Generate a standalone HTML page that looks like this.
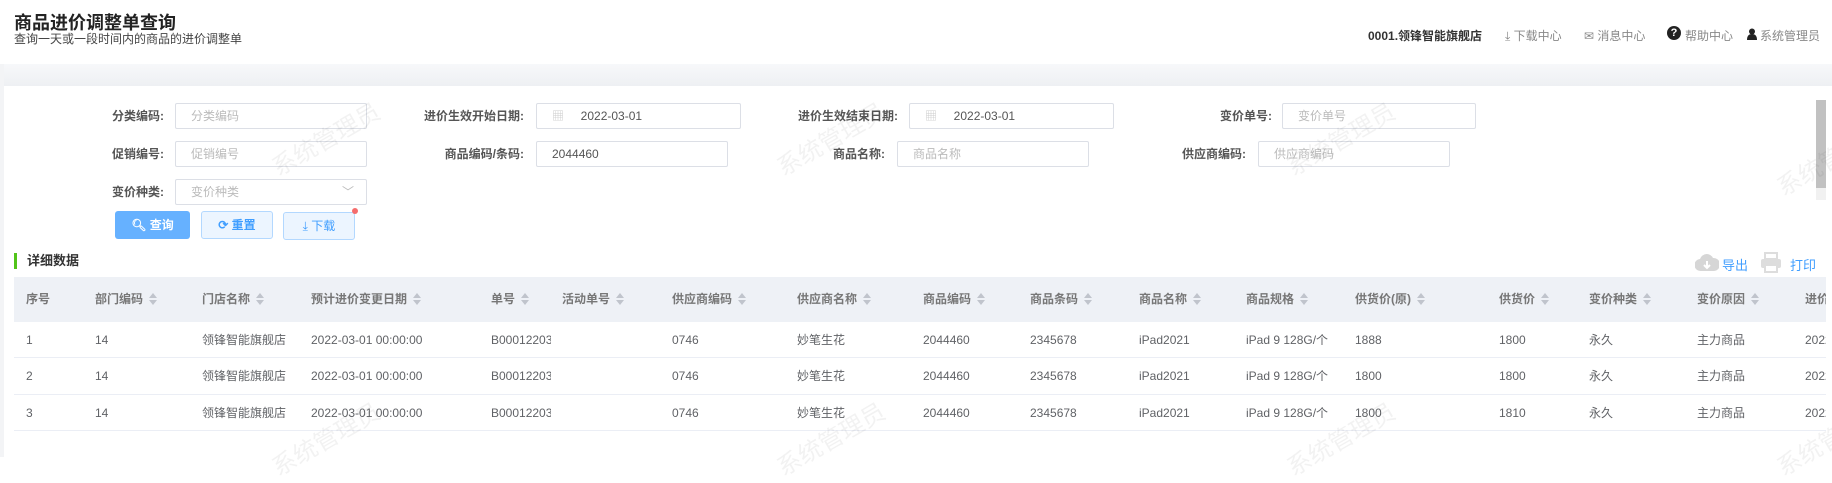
<!DOCTYPE html>
<html><head><meta charset="utf-8"><style>
*{margin:0;padding:0;box-sizing:border-box}
body{width:1832px;height:457px;overflow:hidden;background:#fff;font-family:"Liberation Sans","Noto Sans CJK SC",sans-serif;font-size:12px;color:#606266;position:relative}
.a{position:absolute;white-space:nowrap}
.lbl{position:absolute;color:#555;font-weight:bold;font-size:12px;text-align:right;line-height:26px}
.in{position:absolute;height:26px;border:1px solid #dcdfe6;border-radius:2px;line-height:24px;padding-left:15px;color:#bbb;font-size:12px;background:#fff}
.in.v{color:#555}
.th{position:absolute;top:0;height:45px;line-height:45px;font-weight:bold;color:#777;white-space:nowrap}
.sort{display:inline-block;width:8px;height:12px;vertical-align:middle;margin-left:6px;position:relative;top:-1px}
.sort:before{content:"";position:absolute;left:0;top:0;border:4px solid transparent;border-bottom:5px solid #c0c4cc;border-top:0}
.sort:after{content:"";position:absolute;left:0;top:7px;border:4px solid transparent;border-top:5px solid #c0c4cc;border-bottom:0}
.td{position:absolute;line-height:36px;white-space:nowrap;color:#606266}
.wm{position:absolute;color:rgba(0,0,0,0.05);font-size:24px;transform:rotate(-30deg);white-space:nowrap}
</style></head><body>
<div class="a" style="left:14px;top:9px;font-size:18px;font-weight:bold;color:#222">商品进价调整单查询</div>
<div class="a" style="left:14px;top:30px;font-size:12px;color:#444">查询一天或一段时间内的商品的进价调整单</div>

<div class="a" style="left:1368px;top:27px;font-weight:bold;color:#333">0001.领锋智能旗舰店</div>
<div class="a" style="left:1505px;top:27px;color:#888">⤓ 下载中心</div>
<div class="a" style="left:1584px;top:27px;color:#888">✉ 消息中心</div>
<div class="a" style="left:1667px;top:26px;width:14px;height:14px;border-radius:50%;background:#222;color:#fff;font-size:11px;font-weight:bold;text-align:center;line-height:14px">?</div>
<div class="a" style="left:1685px;top:27px;color:#888">帮助中心</div>
<svg class="a" style="left:1747px;top:28px" width="10" height="12"><circle cx="5" cy="3.5" r="3" fill="#222"/><path d="M0 12 Q0 6 5 6 Q10 6 10 12Z" fill="#222"/></svg>
<div class="a" style="left:1760px;top:27px;color:#888">系统管理员</div>

<div class="a" style="left:0;top:64px;width:1832px;height:22px;background:linear-gradient(#f7f8fa,#eef0f3)"></div>
<div class="a" style="left:0;top:64px;width:4px;height:393px;background:#f3f4f6"></div>

<div class="lbl" style="left:80px;width:84px;top:103px">分类编码:</div>
<div class="in" style="left:175px;width:192px;top:103px">分类编码</div>
<div class="lbl" style="left:400px;width:124px;top:103px">进价生效开始日期:</div>
<div class="in v" style="left:536px;width:205px;top:103px"><span style="color:#ccc">▦</span>&nbsp;&nbsp;&nbsp;&nbsp;&nbsp;2022-03-01</div>
<div class="lbl" style="left:770px;width:128px;top:103px">进价生效结束日期:</div>
<div class="in v" style="left:909px;width:205px;top:103px"><span style="color:#ccc">▦</span>&nbsp;&nbsp;&nbsp;&nbsp;&nbsp;2022-03-01</div>
<div class="lbl" style="left:1180px;width:92px;top:103px">变价单号:</div>
<div class="in" style="left:1282px;width:194px;top:103px">变价单号</div>

<div class="lbl" style="left:80px;width:84px;top:141px">促销编号:</div>
<div class="in" style="left:175px;width:192px;top:141px">促销编号</div>
<div class="lbl" style="left:400px;width:124px;top:141px">商品编码/条码:</div>
<div class="in v" style="left:536px;width:192px;top:141px">2044460</div>
<div class="lbl" style="left:780px;width:105px;top:141px">商品名称:</div>
<div class="in" style="left:897px;width:192px;top:141px">商品名称</div>
<div class="lbl" style="left:1150px;width:96px;top:141px">供应商编码:</div>
<div class="in" style="left:1258px;width:192px;top:141px">供应商编码</div>

<div class="a" style="left:0;top:177px;width:1810px;height:28px;overflow:hidden">
<div class="lbl" style="left:80px;width:84px;top:2px">变价种类:</div>
<div class="in" style="left:175px;width:192px;top:2px">变价种类<span style="position:absolute;right:12px;top:0;color:#bbb">﹀</span></div>
</div>
<div class="a" style="left:1816px;top:100px;width:10px;height:88px;background:#c1c1c1"></div>
<div class="a" style="left:1816px;top:188px;width:10px;height:12px;background:#f1f1f1"></div>

<div class="a" style="left:115px;top:211px;width:75px;height:28px;background:#66b1ff;border-radius:3px;color:#fff;text-align:center;line-height:28px;font-weight:bold">&#x1F50D;&#xFE0E; 查询</div>
<div class="a" style="left:201px;top:211px;width:72px;height:28px;background:#ecf5ff;border:1px solid #b3d8ff;border-radius:3px;color:#409eff;text-align:center;line-height:26px;font-weight:bold">⟳ 重置</div>
<div class="a" style="left:283px;top:212px;width:72px;height:28px;background:#ecf5ff;border:1px solid #b3d8ff;border-radius:3px;color:#409eff;text-align:center;line-height:26px">⤓ 下载</div>
<div class="a" style="left:352px;top:208px;width:6px;height:6px;background:#f56c6c;border-radius:50%"></div>

<div class="a" style="left:14px;top:253px;width:3px;height:16px;background:#52c41a"></div>
<div class="a" style="left:27px;top:253px;font-size:13px;font-weight:bold;color:#333;line-height:16px">详细数据</div>
<svg class="a" style="left:1695px;top:253px" width="24" height="20"><path d="M6 18 A6 6 0 0 1 5 6 A7 7 0 0 1 18 5 A6 6 0 0 1 19 18Z" fill="#d6d6d6"/><path d="M12 8v7M9 12l3 3 3-3" stroke="#fff" stroke-width="2" fill="none"/></svg>
<div class="a" style="left:1722px;top:255px;font-size:13px;color:#409eff">导出</div>
<svg class="a" style="left:1760px;top:252px" width="22" height="21"><rect x="5" y="1" width="12" height="6" fill="none" stroke="#ddd" stroke-width="2"/><rect x="1" y="7" width="20" height="9" rx="2" fill="#ddd"/><rect x="5" y="13" width="12" height="7" fill="#fff" stroke="#ddd" stroke-width="2"/></svg>
<div class="a" style="left:1790px;top:255px;font-size:13px;color:#409eff">打印</div>

<div style="position:absolute;left:0;top:277px;width:1826px;height:160px;overflow:hidden">
<div class="a" style="left:14px;top:0;width:1812px;height:45px;background:#eef1f6"></div>
<div class="a" style="left:14px;top:80px;width:1812px;height:1px;background:#ebeef5"></div>
<div class="a" style="left:14px;top:117px;width:1812px;height:1px;background:#ebeef5"></div>
<div class="a" style="left:14px;top:153px;width:1812px;height:1px;background:#ebeef5"></div>

<div class="th" style="left:26px">序号</div>
<div class="th" style="left:95px">部门编码<i class="sort"></i></div>
<div class="th" style="left:202px">门店名称<i class="sort"></i></div>
<div class="th" style="left:311px">预计进价变更日期<i class="sort"></i></div>
<div class="th" style="left:491px">单号<i class="sort"></i></div>
<div class="th" style="left:562px">活动单号<i class="sort"></i></div>
<div class="th" style="left:672px">供应商编码<i class="sort"></i></div>
<div class="th" style="left:797px">供应商名称<i class="sort"></i></div>
<div class="th" style="left:923px">商品编码<i class="sort"></i></div>
<div class="th" style="left:1030px">商品条码<i class="sort"></i></div>
<div class="th" style="left:1139px">商品名称<i class="sort"></i></div>
<div class="th" style="left:1246px">商品规格<i class="sort"></i></div>
<div class="th" style="left:1355px">供货价(原)<i class="sort"></i></div>
<div class="th" style="left:1499px">供货价<i class="sort"></i></div>
<div class="th" style="left:1589px">变价种类<i class="sort"></i></div>
<div class="th" style="left:1697px">变价原因<i class="sort"></i></div>
<div class="th" style="left:1805px">进价</div>

<div style="position:absolute;left:0;top:45px;width:1826px;height:110px">
<div class="td" style="top:0;left:26px">1</div><div class="td" style="top:36px;left:26px">2</div><div class="td" style="top:73px;left:26px">3</div>
<div class="td" style="top:0;left:95px">14</div><div class="td" style="top:36px;left:95px">14</div><div class="td" style="top:73px;left:95px">14</div>
<div class="td" style="top:0;left:202px">领锋智能旗舰店</div><div class="td" style="top:36px;left:202px">领锋智能旗舰店</div><div class="td" style="top:73px;left:202px">领锋智能旗舰店</div>
<div class="td" style="top:0;left:311px">2022-03-01 00:00:00</div><div class="td" style="top:36px;left:311px">2022-03-01 00:00:00</div><div class="td" style="top:73px;left:311px">2022-03-01 00:00:00</div>
<div class="td" style="top:0;left:491px;width:60px;overflow:hidden">B00012203</div><div class="td" style="top:36px;left:491px;width:60px;overflow:hidden">B00012203</div><div class="td" style="top:73px;left:491px;width:60px;overflow:hidden">B00012203</div>
<div class="td" style="top:0;left:672px">0746</div><div class="td" style="top:36px;left:672px">0746</div><div class="td" style="top:73px;left:672px">0746</div>
<div class="td" style="top:0;left:797px">妙笔生花</div><div class="td" style="top:36px;left:797px">妙笔生花</div><div class="td" style="top:73px;left:797px">妙笔生花</div>
<div class="td" style="top:0;left:923px">2044460</div><div class="td" style="top:36px;left:923px">2044460</div><div class="td" style="top:73px;left:923px">2044460</div>
<div class="td" style="top:0;left:1030px">2345678</div><div class="td" style="top:36px;left:1030px">2345678</div><div class="td" style="top:73px;left:1030px">2345678</div>
<div class="td" style="top:0;left:1139px">iPad2021</div><div class="td" style="top:36px;left:1139px">iPad2021</div><div class="td" style="top:73px;left:1139px">iPad2021</div>
<div class="td" style="top:0;left:1246px">iPad 9 128G/个</div><div class="td" style="top:36px;left:1246px">iPad 9 128G/个</div><div class="td" style="top:73px;left:1246px">iPad 9 128G/个</div>
<div class="td" style="top:0;left:1355px">1888</div><div class="td" style="top:36px;left:1355px">1800</div><div class="td" style="top:73px;left:1355px">1800</div>
<div class="td" style="top:0;left:1499px">1800</div><div class="td" style="top:36px;left:1499px">1800</div><div class="td" style="top:73px;left:1499px">1810</div>
<div class="td" style="top:0;left:1589px">永久</div><div class="td" style="top:36px;left:1589px">永久</div><div class="td" style="top:73px;left:1589px">永久</div>
<div class="td" style="top:0;left:1697px">主力商品</div><div class="td" style="top:36px;left:1697px">主力商品</div><div class="td" style="top:73px;left:1697px">主力商品</div>
<div class="td" style="top:0;left:1805px">2022</div><div class="td" style="top:36px;left:1805px">2022</div><div class="td" style="top:73px;left:1805px">2022</div>
</div>
</div>

<div class="wm" style="left:265px;top:120px">系统管理员</div>
<div class="wm" style="left:770px;top:120px">系统管理员</div>
<div class="wm" style="left:1280px;top:120px">系统管理员</div>
<div class="wm" style="left:1770px;top:140px">系统管理员</div>
<div class="wm" style="left:265px;top:420px">系统管理员</div>
<div class="wm" style="left:770px;top:420px">系统管理员</div>
<div class="wm" style="left:1280px;top:420px">系统管理员</div>
<div class="wm" style="left:1770px;top:420px">系统管理员</div>
</body></html>
